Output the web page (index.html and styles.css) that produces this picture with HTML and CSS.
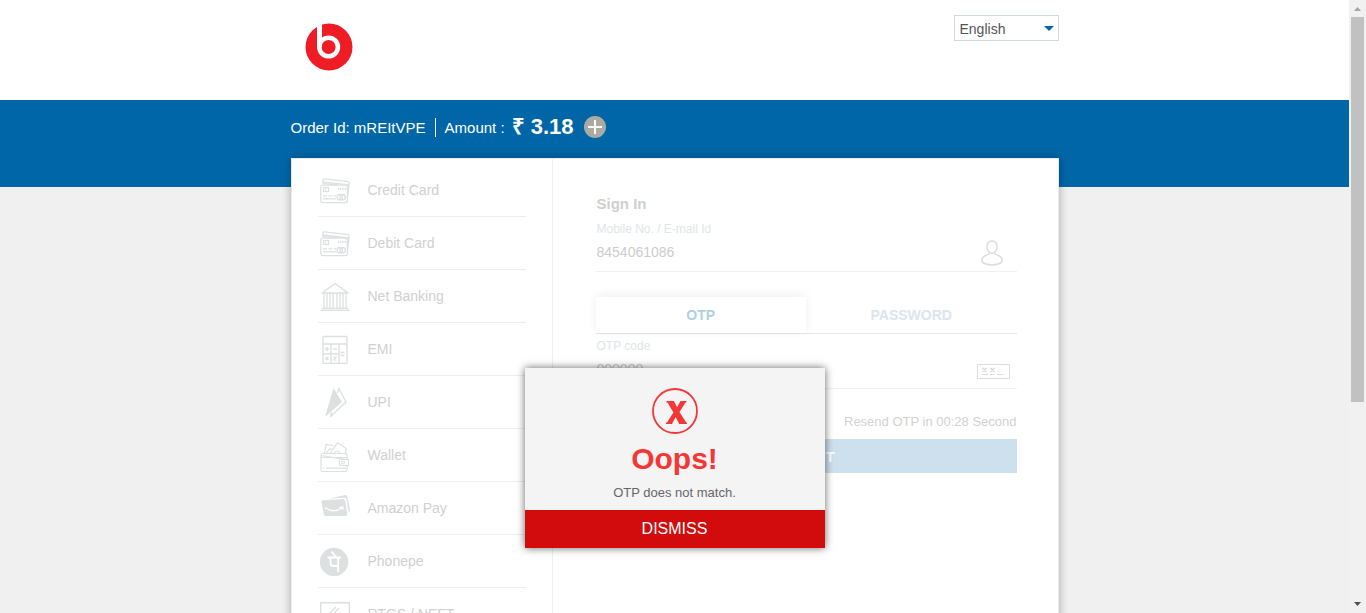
FILE: index.html
```html
<!DOCTYPE html>
<html lang="en">
<head>
<meta charset="utf-8">
<title>Payment</title>
<link rel="stylesheet" href="styles.css">
</head>
<body>
<svg class="defs" aria-hidden="true">
  <symbol id="cards" viewBox="0 0 30 26">
    <g fill="none" stroke="currentColor" stroke-width="1.300">
      <rect x="0.8" y="7.2" width="26.6" height="17.4" rx="2"/>
      <path d="M2.500 5.200L3 1.800Q3.300.7 4.500.8L28 3.700Q29.400 4 29.200 5.200L27.600 18.500M3 3.800L29 7M2.500 5.300L18 7.200"/>
      <rect x="3.500" y="9.500" width="5" height="4"/>
      <path d="M5 11.500h2M18 10.800h8" stroke-dasharray="1.200 1" stroke-width="2.200"/>
      <path d="M3 17.800h13" stroke-dasharray="4 1.400"/>
      <path d="M3 20.800h13"/>
      <circle cx="19.700" cy="19.200" r="2.700"/><circle cx="22.600" cy="19.200" r="2.700"/>
    </g>
  </symbol>
</svg>
<div class="window">
  <div class="page">
    <header class="header">
      <div class="wrap header-row">
        <svg class="logo" viewBox="0 0 48 48" role="img" aria-label="Logo">
          <circle cx="24" cy="24" r="23.500" fill="#ee1c25"/>
          <path d="M14.500 0v24" stroke="#fff" stroke-width="5"/>
          <circle cx="23.600" cy="24" r="9.300" fill="none" stroke="#fff" stroke-width="4.600"/>
        </svg>
        <div class="language">
          <select aria-label="Language"><option>English</option></select>
          <svg class="caret" viewBox="0 0 10 5" aria-hidden="true"><path d="M0 0h10L5 5z" fill="#0066a8"/></svg>
        </div>
      </div>
    </header>
    <section class="order">
      <div class="wrap order-row">
        <span class="order-id">Order Id: mREItVPE</span>
        <span class="amount-label">Amount :</span>
        <strong class="amount">₹ 3.18</strong>
        <button class="plus" type="button" aria-label="Show details">
          <svg viewBox="0 0 22 22"><circle cx="11" cy="11" r="11" fill="#acaba3"/><path d="M11 4v14M4 11h14" stroke="#fff" stroke-width="2"/></svg>
        </button>
      </div>
    </section>
    <main class="wrap card">
      <nav class="menu">
        <a href="#credit"><svg class="icon" viewBox="0 0 30 30"><use href="#cards" y="3" width="30" height="26"/></svg>Credit Card</a>
        <a href="#debit"><svg class="icon" viewBox="0 0 30 30"><use href="#cards" y="3" width="30" height="26"/></svg>Debit Card</a>
        <a href="#net"><svg class="icon" viewBox="0 0 30 30"><g fill="none" stroke="currentColor"><path d="M2 12L15 2.500 28 12z" stroke-width="1.500" stroke-linejoin="round"/><path d="M4 12v15M7 12v15M10 12v15M13 12v15M17 12v15M20 12v15M23 12v15M26 12v15" stroke-width="1.300"/><path d="M2 27.300h26" stroke-width="1.300"/><path d="M.500 29.500h29" stroke-width="1.800"/></g></svg>Net Banking</a>
        <a href="#emi"><svg class="icon" viewBox="0 0 30 30"><g fill="none" stroke="currentColor" stroke-width="1.400"><rect x="3" y="2.500" width="24" height="27" rx="1"/><path d="M3 10h24M3 20h16M11 10v19.500M19 10v19.500M5 15h4M7 13v4M13 15h4M20.500 18.500h4M20.500 21.500h4M5.500 23l3 3M8.500 23l-3 3M13.500 26.500l3-4M13.500 23h1M15.500 26.500h1"/></g></svg>EMI</a>
        <a href="#upi"><svg class="icon" viewBox="0 0 30 30"><path d="M13.500 1L22 15 5 30z" fill="currentColor"/><path d="M17.500 6L18.800 1.500 26 15 10.500 29.500l1.200-4.200" fill="none" stroke="currentColor" stroke-width="1.400"/></svg>UPI</a>
        <a href="#wallet"><svg class="icon wallet" viewBox="0 0 30 30"><g fill="none" stroke="currentColor" stroke-width="1.200"><path d="M1 13.500V28q0 1.500 1.500 1.500h23q1.500 0 1.500-1.500v-4M27 17.500V13q0-1.500-1.500-1.500h-23Q1 11.500 1 13.500zM1 15.500h26M3 26.200h1M6 26.200h20M28.500 17.500H22a3 3 0 0 0 0 6h6.500z"/><circle cx="23" cy="20.500" r="1.500"/><path d="M4.500 11.500L6 2.500l7.500 1M10 11.500L17.500.800l8.500 5.400-.5 5.300M6.500 11.500q1-4 5.500-5M13.500 11.500q3.500-5 7 0"/></g></svg>Wallet</a>
        <a href="#amazon"><svg class="icon" viewBox="0 0 30 30"><path d="M9 5.500L25 2q2-.3 2.300 1.500L30 17q0 1.500-1.500 2.300L26.600 6.500q-.4-2-2.600-1.700z" fill="currentColor"/><path d="M3 7.200L23 5.900q2-.1 2.200 1.800L27.200 20q.3 3-2 3H6q-2 0-2.300-2L1.500 9q-.2-1.700 1.500-1.800z" fill="currentColor"/><path d="M5 14.500q9 6.500 17 0M19.500 14.500l3.500-.5-.5 3" fill="none" stroke="#fff" stroke-width="1.300"/></svg>Amazon Pay</a>
        <a href="#phonepe"><svg class="icon" viewBox="0 0 30 30"><circle cx="14" cy="16" r="14.200" fill="currentColor"/><path d="M7.500 11.500H21M11.500 5.500l4.500 5.500M10.500 11.500V17q0 3 3 3h4.500M18.200 11.500V26" fill="none" stroke="#fff" stroke-width="1.800"/></svg>Phonepe</a>
        <a href="#rtgs"><svg class="icon" viewBox="0 0 30 30"><path d="M.7 3.700h28.600v20H.7zM10 14l6-6M14 14l5-5M10 29h10M15 24v5" fill="none" stroke="currentColor" stroke-width="1.400"/></svg>RTGS / NEFT</a>
      </nav>
      <form class="sign-in">
        <h2>Sign In</h2>
        <div class="field">
          <label for="mobile">Mobile No. / E-mail Id</label>
          <input id="mobile" type="text" value="8454061086">
          <svg class="field-icon user" viewBox="0 0 22 26" aria-hidden="true"><path d="M8.500 13.700C5 16 1 15.800 1 19.500v2.300q0 .8 1.300 1.200c5 2.500 12.400 2.500 17.400 0 .9-.4 1.300-.6 1.300-1.200v-2.300c0-3.700-4-3.500-7.500-5.800M11 1C7.500 1 6 3.500 6 6.800S8 13.500 11 13.500s5-3.400 5-6.700S14.500 1 11 1z" fill="none" stroke="currentColor" stroke-width="1.500"/></svg>
        </div>
        <div class="tabs">
          <button class="tab active" type="button">OTP</button>
          <button class="tab" type="button">PASSWORD</button>
        </div>
        <div class="field">
          <label for="otp">OTP code</label>
          <input id="otp" type="text" value="000000">
          <svg class="field-icon code" viewBox="0 0 33 15" aria-hidden="true"><path d="M.5.500h32v14H.5z" fill="none" stroke="currentColor"/><path d="M5.500 4l4 4M9.500 4l-4 4M13.500 4l4 4M17.500 4l-4 4" stroke="currentColor" stroke-width="1.700"/><path d="M5 10.500h6M13 10.500h5M20 10.500h6" stroke="currentColor"/></svg>
        </div>
        <p class="resend">Resend OTP in 00:28 Second</p>
        <button class="submit" type="submit">SUBMIT</button>
      </form>
    </main>
    <div class="dialog" role="alertdialog" aria-labelledby="oops">
      <div class="dialog-body">
        <svg class="error" viewBox="0 0 46 46" aria-hidden="true"><circle cx="23" cy="23" r="22" fill="none" stroke="#f53636" stroke-width="1.800"/><path d="M14.500 13h7.300l3.300 6.200L28.500 13h6v1.500h-1L27.500 24l6.700 10.500h.8V36h-7.700L23.600 29 20 36h-6v-1.500h1L21.400 24.500 15.500 14.500h-1z" fill="#f53636"/></svg>
        <h1 id="oops">Oops!</h1>
        <p>OTP does not match.</p>
      </div>
      <button class="dismiss" type="button">DISMISS</button>
    </div>
  </div>
  <div class="scrollbar" aria-hidden="true">
    <svg viewBox="0 0 17 17"><path d="M5 11h7L8.500 7z" fill="#a3a3a3"/></svg>
    <div class="thumb"></div>
    <svg class="down" viewBox="0 0 17 17"><path d="M5 6h7L8.500 10z" fill="#505050"/></svg>
  </div>
</div>
</body>
</html>
```
FILE: styles.css
```css
* { box-sizing: border-box; }
body { margin: 0; font-family: "Liberation Sans", Arial, sans-serif; background: #f0f0f0; color: #555; }
h1, h2, p { margin: 0; }
button, input, select { font-family: inherit; border: 0; padding: 0; margin: 0; background: none; }
.defs { position: absolute; width: 0; height: 0; }
.window { display: flex; height: 100vh; overflow: hidden; }
.page { position: relative; flex: 1; min-width: 0; overflow: hidden; }
.wrap { width: 100%; max-width: 768px; margin: 0 auto; }

.header { background: #fff; height: 100px; }
.header-row { display: flex; justify-content: space-between; align-items: flex-start; padding: 15px 0 0 14px; }
.logo { width: 48px; height: 48px; margin-top: 8px; }
.language { display: grid; align-items: center; width: 105px; height: 26px; border: 1px solid #cfd9df; }
.language select { grid-area: 1 / 1; appearance: none; width: 100%; height: 24px; padding: 2px 0 0 5px; font-size: 14px; color: #555; }
.caret { grid-area: 1 / 1; justify-self: end; width: 10px; height: 5px; margin-right: 4px; pointer-events: none; }

.order { height: 87px; background: #0066a8; color: #fff; }
.order-row { display: flex; align-items: center; height: 54px; font-size: 15px; line-height: 19px; white-space: nowrap; }
.order-id { padding-right: 9px; border-right: 1px solid #fff; }
.amount-label { padding-left: 9px; }
.amount { margin: 0 10px 0 7px; padding-bottom: 2px; font-size: 22px; }
.plus { display: flex; }
.plus svg { width: 22px; height: 22px; }

.card { display: flex; margin-top: -29px; min-height: 540px; background: #fff; border: 1px solid #e8ebec; box-shadow: 0 0 9px rgba(0, 0, 0, .3); }
.menu { flex: 0 0 261px; padding: 5px 26px 0; border-right: 1px solid #eef1f1; }
.menu a { display: flex; align-items: center; gap: 18px; height: 53px; padding-left: 2px; border-bottom: 1px solid #eceeef; color: #d0d0d0; font-size: 14px; text-decoration: none; }
.icon { width: 30px; height: 30px; color: #dde0e1; }
.wallet { overflow: visible; margin-top: 4px; }

.sign-in { flex: 1; min-width: 0; padding: 36px 41px 0 43px; }
.sign-in h2 { padding-left: 1px; font-size: 15px; line-height: 18px; color: #cfcfcf; }
.field { display: grid; grid-template-columns: 1fr auto; padding-left: 1px; border-bottom: 1px solid #f0f0f0; }
.field label { grid-column: 1 / -1; padding-top: 8px; font-size: 12px; line-height: 16px; color: #e0e5ea; }
.field input { min-width: 0; width: 100%; height: 34px; padding-bottom: 4px; font-size: 14px; color: #ccc; }
.field-icon { color: #dcdcdc; }
.user { width: 22px; height: 26px; margin: 3px 14px 0 0; }
.code { width: 33px; height: 15px; margin: 10px 7px 0 0; }
.tabs { display: grid; grid-template-columns: 1fr 1fr; height: 37px; margin-top: 25px; border-bottom: 1px solid #e6e6e6; }
.tab { font-size: 14px; font-weight: bold; color: #dce4ee; }
.active { color: #b0d0e6; background: #fff; box-shadow: 0 -2px 9px rgba(0, 0, 0, .07); }
.tabs + .field label { padding-top: 4px; }
.resend { padding: 24px 0 9px; font-size: 13px; line-height: 17px; text-align: right; color: #d2d2d2; }
.submit { width: 100%; height: 34px; background: #cde0ed; color: #fff; font-size: 15px; font-weight: bold; }

.dialog { position: absolute; top: 368px; left: 0; right: 0; width: 300px; margin: 0 auto; background: #f4f4f4; box-shadow: 0 0 8px rgba(0, 0, 0, .6); text-align: center; }
.dialog-body { display: flex; flex-direction: column; align-items: center; padding: 20px 0 9px; }
.error { width: 46px; height: 46px; }
.dialog h1 { margin-top: 7px; font-size: 30px; line-height: 36px; color: #f53636; }
.dialog p { margin-top: 7px; font-size: 13px; line-height: 17px; color: #666; }
.dismiss { display: block; width: 100%; height: 38px; background: #d20c0c; color: #fff; font-size: 16px; }

.scrollbar { flex: 0 0 17px; display: flex; flex-direction: column; background: #f1f1f1; }
.scrollbar svg { display: block; flex: none; width: 17px; height: 17px; }
.thumb { flex: 0 0 66%; max-height: 385px; margin: 0 2px; background: #c1c1c1; }
.down { margin-top: auto; }
```
